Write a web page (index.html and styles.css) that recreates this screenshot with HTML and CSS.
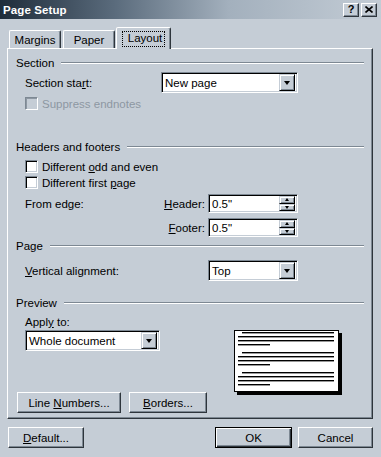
FILE: index.html
```html
<!DOCTYPE html>
<html lang="en">
<head>
  <meta charset="UTF-8" />
  <title>Page Setup</title>
  <link rel="stylesheet" href="styles.css">
</head>
<body>
  <div class="dialog">
    <div class="titlebar">
      <span class="title">Page Setup</span>
      <div class="caption-btns">
        <span class="cap-btn">?</span>
        <span class="cap-btn">
          <svg width="8" height="7" viewBox="0 0 8 7"><path d="M0.5 0.5 L7.5 6.5 M7.5 0.5 L0.5 6.5" stroke="#000" stroke-width="1.6"/></svg>
        </span>
      </div>
    </div>

    <div class="tabs">
      <div class="tab">Margins</div>
      <div class="tab">Paper</div>
      <div class="tab active"><span class="focus">Layout</span></div>
    </div>

    <div class="panel">
      <div class="group-head"><span>Section</span><i></i></div>
      <div class="row row-select">
        <span class="label w136">Section sta<u>r</u>t:</span>
        <div class="select w137"><span class="value">New page</span><span class="drop"><b></b></span></div>
      </div>
      <div class="check disabled mt4">
        <span class="box"></span><span>Suppress endnotes</span>
      </div>

      <div class="group-head mt31"><span>Headers and footers</span><i></i></div>
      <div class="check mt7">
        <span class="box"></span><span>Different <u>o</u>dd and even</span>
      </div>
      <div class="check mt3">
        <span class="box"></span><span>Different first <u>p</u>age</span>
      </div>
      <div class="row row-spin mt5">
        <div class="edge-labels"><span>From edge:</span><span><u>H</u>eader:</span></div>
        <div class="spin"><span class="value">0.5"</span><span class="arrows"><span class="up"><b></b></span><span class="down"><b></b></span></span></div>
      </div>
      <div class="row row-spin mt5">
        <div class="edge-labels"><span></span><span><u>F</u>ooter:</span></div>
        <div class="spin"><span class="value">0.5"</span><span class="arrows"><span class="up"><b></b></span><span class="down"><b></b></span></span></div>
      </div>

      <div class="group-head mt3"><span>Page</span><i></i></div>
      <div class="row row-select mt8">
        <span class="label w183"><u>V</u>ertical alignment:</span>
        <div class="select w90"><span class="value">Top</span><span class="drop"><b></b></span></div>
      </div>

      <div class="group-head mt16"><span>Preview</span><i></i></div>
      <div class="apply-label">Appl<u>y</u> to:</div>
      <div class="preview-row">
        <div class="select w135"><span class="value">Whole document</span><span class="drop"><b></b></span></div>
        <div class="page">
          <div class="para"><i class="indent"></i><i></i><i></i><i class="short"></i></div>
          <div class="para"><i class="indent"></i><i></i><i></i><i class="short"></i></div>
          <div class="para"><i class="indent"></i><i></i><i></i><i class="short"></i></div>
        </div>
      </div>
      <div class="panel-btns">
        <span class="btn w104"><span>Line <u>N</u>umbers...</span></span>
        <span class="btn w78"><span><u>B</u>orders...</span></span>
      </div>
    </div>

    <div class="footer">
      <span class="btn w76"><span><u>D</u>efault...</span></span>
      <div class="footer-right">
        <span class="btn default w77">OK</span>
        <span class="btn w75">Cancel</span>
      </div>
    </div>
  </div>
</body>
</html>
```

FILE: styles.css
```css
:root {
  --bg: #c5cdd6;
  --light: #ffffff;
  --shadow: #7d8893;
  --dark: #2e353c;
}
body {
  margin: 0;
  font-family: 'Liberation Sans', Arial, sans-serif;
  font-size: 11px;
  color: #000;
  background: var(--bg);
}
u {
  text-decoration: underline;
  text-underline-offset: 1px;
}
.dialog {
  width: 381px;
  height: 457px;
  background: var(--bg);
  overflow: hidden;
}
.titlebar {
  height: 19px;
  display: flex;
  align-items: center;
  justify-content: space-between;
  padding: 0 4px 0 3px;
  background: linear-gradient(to right, #1f2d3b 0%, #5a6b7c 30%, #a3b0bd 60%, #c3ccd5 100%);
}
.title {
  color: #fff;
  font-weight: bold;
  font-size: 11.5px;
  letter-spacing: 0.1px;
}
.caption-btns {
  display: flex;
  gap: 2px;
}
.cap-btn {
  width: 16px;
  height: 14px;
  box-sizing: border-box;
  display: flex;
  align-items: center;
  justify-content: center;
  background: var(--bg);
  border: 1px solid;
  border-color: var(--light) var(--dark) var(--dark) var(--light);
  box-shadow: inset -1px -1px 0 var(--shadow);
  font-weight: bold;
  font-size: 11px;
  line-height: 1;
}
.tabs {
  display: flex;
  align-items: flex-end;
  height: 21px;
  margin-top: 8px;
  padding-left: 9px;
}
.tab {
  width: 52px;
  height: 18px;
  box-sizing: border-box;
  margin-right: 2px;
  display: flex;
  align-items: center;
  justify-content: center;
  border: 1px solid;
  border-bottom: none;
  border-color: var(--light) var(--dark) transparent var(--light);
  border-radius: 2px 2px 0 0;
  box-shadow: inset -1px 0 0 var(--shadow);
  font-size: 11.5px;
}
.tab.active {
  width: 55px;
  height: 22px;
  margin-left: -1px;
  margin-bottom: -1px;
  position: relative;
  z-index: 1;
  background: var(--bg);
}
.focus {
  padding: 0 2px 1px 5px;
  outline: 1px dotted #000;
  line-height: 13px;
}
.panel {
  width: 366px;
  margin-left: 7px;
  box-sizing: border-box;
  padding: 8px 8px 5px 8px;
  border: 1px solid;
  border-color: var(--light) var(--dark) var(--dark) var(--light);
  box-shadow: inset -1px -1px 0 var(--shadow);
}
.group-head {
  display: flex;
  align-items: center;
  height: 12px;
  line-height: 12px;
  font-size: 11.5px;
}
.group-head i {
  flex: 1;
  margin-left: 7px;
  border-top: 1px solid var(--shadow);
  border-bottom: 1px solid var(--light);
}
.mt3 { margin-top: 3px; }
.mt4 { margin-top: 4px; }
.mt5 { margin-top: 5px; }
.mt7 { margin-top: 7px; }
.mt8 { margin-top: 8px; }
.mt16 { margin-top: 16px; }
.mt31 { margin-top: 31px; }
.row {
  display: flex;
  align-items: center;
  padding-left: 9px;
  font-size: 11.5px;
}
.row-select {
  height: 21px;
  margin-top: 3px;
}
.row-select.mt8 { margin-top: 8px; }
.row-spin { height: 19px; }
.w136 { width: 136px; }
.w183 { width: 183px; }
.w137 { width: 137px; }
.w90 { width: 90px; }
.w135 { width: 135px; }
.w104 { width: 104px; }
.w78 { width: 78px; }
.w76 { width: 76px; }
.w77 { width: 77px; }
.w75 { width: 75px; }
.select, .spin {
  height: 21px;
  box-sizing: border-box;
  display: flex;
  align-items: center;
  background: #fff;
  border: 1px solid;
  border-color: var(--shadow) var(--light) var(--light) var(--shadow);
  box-shadow: inset 1px 1px 0 #000, inset -1px -1px 0 var(--bg);
  padding: 2px;
}
.select .value, .spin .value {
  flex: 1;
  padding-left: 1px;
  font-size: 11.5px;
}
.drop {
  width: 16px;
  height: 17px;
  box-sizing: border-box;
  display: flex;
  align-items: center;
  justify-content: center;
  background: var(--bg);
  border: 1px solid;
  border-color: var(--bg) #000 #000 var(--bg);
  box-shadow: inset 1px 1px 0 var(--light), inset -1px -1px 0 var(--shadow);
}
.drop b {
  width: 0;
  height: 0;
  border-left: 3.5px solid transparent;
  border-right: 3.5px solid transparent;
  border-top: 4px solid #000;
  margin-top: 1px;
}
.spin {
  width: 90px;
  height: 19px;
}
.arrows {
  width: 16px;
  height: 15px;
  display: flex;
  flex-direction: column;
}
.arrows span {
  flex: 1;
  box-sizing: border-box;
  display: flex;
  align-items: center;
  justify-content: center;
  background: var(--bg);
  border: 1px solid;
  border-color: var(--bg) #000 #000 var(--bg);
  box-shadow: inset 1px 1px 0 var(--light), inset -1px -1px 0 var(--shadow);
}
.arrows .up b {
  border-left: 2.5px solid transparent;
  border-right: 2.5px solid transparent;
  border-bottom: 3px solid #000;
}
.arrows .down b {
  border-left: 2.5px solid transparent;
  border-right: 2.5px solid transparent;
  border-top: 3px solid #000;
}
.edge-labels {
  width: 180px;
  display: flex;
  justify-content: space-between;
  margin-right: 3px;
}
.check {
  display: flex;
  align-items: center;
  height: 13px;
  padding-left: 9px;
  gap: 4px;
  font-size: 11.5px;
}
.box {
  width: 13px;
  height: 13px;
  box-sizing: border-box;
  background: #fff;
  border: 1px solid;
  border-color: var(--shadow) var(--light) var(--light) var(--shadow);
  box-shadow: inset 1px 1px 0 #000, inset -1px -1px 0 var(--bg);
}
.check.disabled { color: #8d97a2; }
.check.disabled .box {
  background: var(--bg);
  box-shadow: inset 1px 1px 0 #8d97a2, inset -1px -1px 0 var(--bg);
}
.apply-label {
  margin-top: 7px;
  height: 12px;
  line-height: 12px;
  padding-left: 9px;
  font-size: 11.5px;
}
.preview-row {
  display: flex;
  align-items: flex-start;
  height: 62px;
  margin-top: 2px;
  padding-left: 9px;
}
.page {
  width: 105px;
  height: 62px;
  box-sizing: border-box;
  margin-left: 74px;
  background: #fff;
  border: 1px solid #000;
  box-shadow: 3px 3px 0 #000;
  padding: 1px 4px 0 3px;
  display: flex;
  flex-direction: column;
  gap: 7px;
}
.para {
  display: flex;
  flex-direction: column;
  gap: 3px;
}
.para i {
  display: block;
  height: 1px;
  background: #000;
  box-shadow: 0 0.6px 0 #555;
}
.para i.indent { margin-left: 4px; }
.para i.short { width: 32px; }
.panel-btns {
  display: flex;
  gap: 8px;
  margin-left: 1px;
}
.btn {
  height: 21px;
  box-sizing: border-box;
  display: flex;
  align-items: center;
  justify-content: center;
  background: var(--bg);
  border: 1px solid;
  border-color: var(--light) var(--dark) var(--dark) var(--light);
  box-shadow: inset -1px -1px 0 var(--shadow);
  font-size: 11.5px;
}
.btn.default {
  border: 1px solid #000;
  box-shadow: inset 1px 1px 0 var(--light), inset -1px -1px 0 var(--dark), inset -2px -2px 0 var(--shadow);
}
.footer {
  display: flex;
  justify-content: space-between;
  margin-top: 8px;
  padding: 0 8px;
}
.footer-right {
  display: flex;
  gap: 6px;
}
```
